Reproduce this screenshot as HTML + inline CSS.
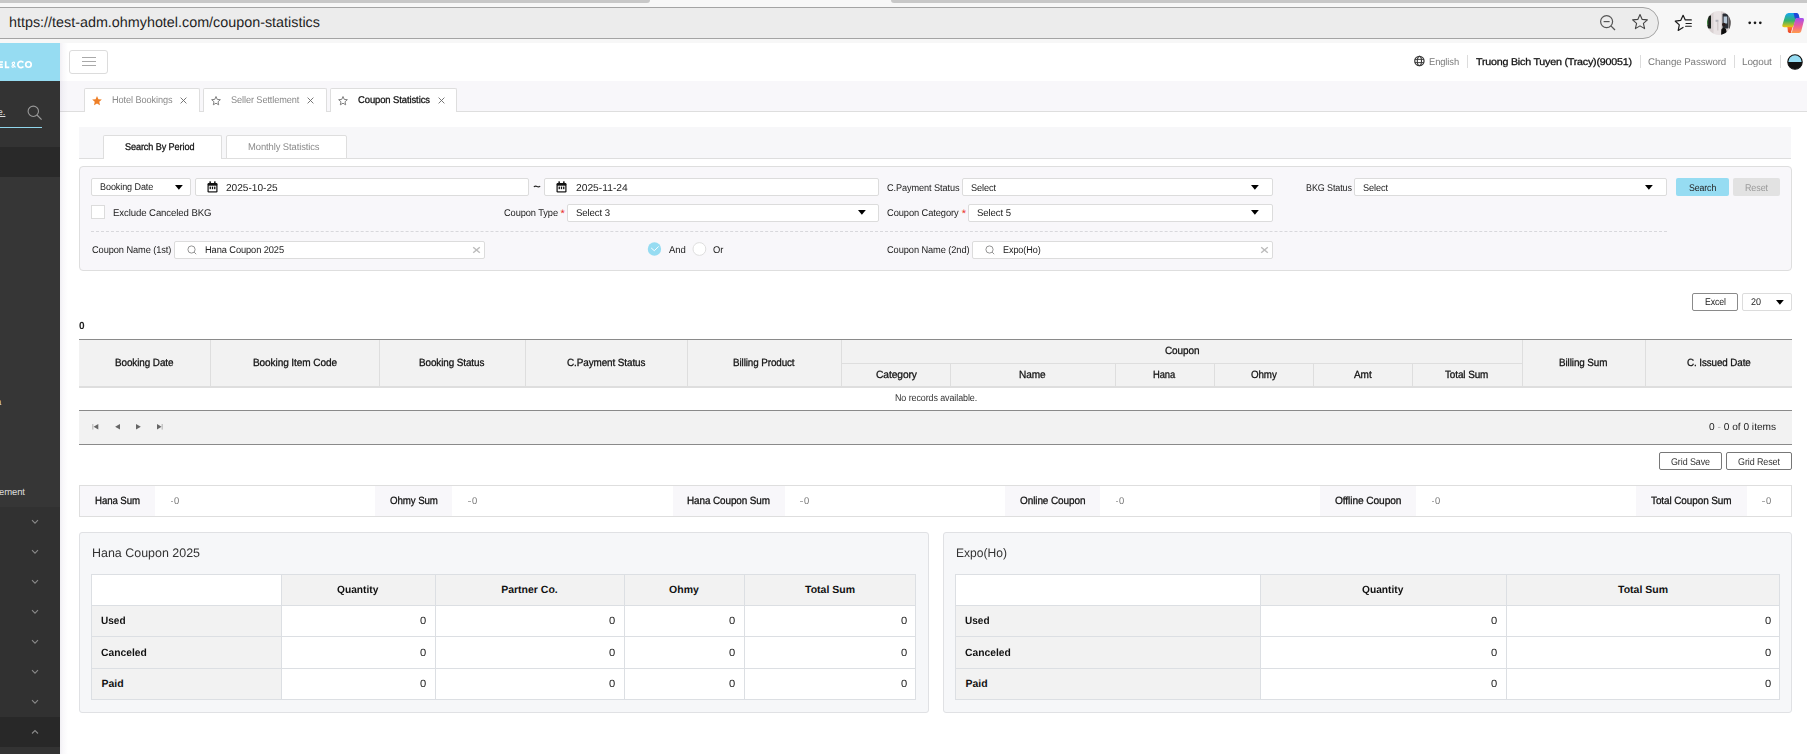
<!DOCTYPE html>
<html><head><meta charset="utf-8">
<style>
*{box-sizing:border-box}
html,body{margin:0;padding:0}
body{width:1807px;height:754px;overflow:hidden;position:relative;background:#fff;font-family:"Liberation Sans",sans-serif;color:#222;text-rendering:geometricPrecision}
.a{position:absolute}
.t{position:absolute;white-space:nowrap;line-height:1}
</style></head><body>
<div class="a" style="left:0.00px;top:0.00px;width:1807.00px;height:43.00px;background:#f7f7f7"></div>
<div class="a" style="left:0.00px;top:0.00px;width:649.50px;height:3.00px;background:#c8c8c8;border-bottom-right-radius:3px"></div>
<div class="a" style="left:891.00px;top:0.00px;width:916.00px;height:3.00px;background:#c8c8c8;border-bottom-left-radius:3px"></div>
<div class="a" style="left:-40.00px;top:7.00px;width:1699.00px;height:32.00px;background:#ececec;border:1px solid #a4a4a4;border-radius:16px"></div>
<div class="t" style="left:9px;top:16px;font-size:14.35px;color:#1f1f1f">https://test-adm.ohmyhotel.com/coupon-statistics</div>
<svg class="a" style="left:1598px;top:13px" width="20" height="20" viewBox="0 0 20 20"><circle cx="8.6" cy="8.6" r="6" fill="none" stroke="#555" stroke-width="1.2"/><line x1="5.6" y1="8.6" x2="11.6" y2="8.6" stroke="#555" stroke-width="1.2"/><line x1="12.9" y1="12.9" x2="17" y2="17" stroke="#555" stroke-width="1.3"/></svg>
<svg class="a" style="left:1631px;top:13px" width="18" height="18" viewBox="0 0 18 18"><path d="M9 1.5 L11.2 6.4 L16.4 6.9 L12.4 10.4 L13.6 15.6 L9 12.9 L4.4 15.6 L5.6 10.4 L1.6 6.9 L6.8 6.4 Z" fill="none" stroke="#444" stroke-width="1.1" stroke-linejoin="round"/></svg>
<svg class="a" style="left:1674px;top:13px" width="20" height="20" viewBox="0 0 20 20"><path d="M17.3 6.9 H11.3 L9.1 2.3 L6.8 7.3 L1.3 8.2 L5.3 11.9 L4.2 17.4 L9 14.4" fill="none" stroke="#1a1a1a" stroke-width="1.2" stroke-linejoin="round" stroke-linecap="round"/><path d="M12 10.5 H17.3 M11.6 13.2 H17.3" stroke="#1a1a1a" stroke-width="1.15" stroke-linecap="round"/></svg>
<svg class="a" style="left:1707px;top:11px" width="24" height="24" viewBox="0 0 24 24"><defs><clipPath id="av"><circle cx="11.9" cy="12" r="11.9"/></clipPath><filter id="avb" x="-20%" y="-20%" width="140%" height="140%"><feGaussianBlur stdDeviation="0.4"/></filter></defs><g clip-path="url(#av)"><g filter="url(#avb)"><rect x="-2" y="-2" width="28" height="28" fill="#d9d1d2"/><rect x="6.5" y="-2" width="7.5" height="28" fill="#e9e3e4"/><rect x="0" y="4.5" width="4" height="13" fill="#1c241c"/><rect x="0" y="7" width="1.2" height="7" fill="#3f7f3f"/><rect x="8.6" y="8.8" width="2.8" height="2" fill="#b0b0b8"/><rect x="10.4" y="10.5" width="0.9" height="9" fill="#c4bcbc"/><rect x="15.5" y="2.5" width="6" height="15" rx="1" fill="#2a2e34"/><rect x="16.6" y="5.5" width="3.6" height="7" fill="#b8c8d8"/><rect x="22" y="6" width="3" height="13" fill="#5a5454"/><circle cx="16.8" cy="13.6" r="1.8" fill="#2a1f1c"/><path d="M14 26 L14.3 18.5 Q15.3 16.4 17.4 16.8 Q19.6 17.6 19.4 20 L20.5 26 Z" fill="#101010"/></g></g></svg>
<svg class="a" style="left:1746px;top:20px" width="18" height="6" viewBox="0 0 18 6"><circle cx="3.7" cy="2.8" r="1.35" fill="#1a1a1a"/><circle cx="9" cy="2.8" r="1.35" fill="#1a1a1a"/><circle cx="14.3" cy="2.8" r="1.35" fill="#1a1a1a"/></svg>
<svg class="a" style="left:1781px;top:12px" width="24" height="22" viewBox="0 0 24 22"><defs><linearGradient id="cp1" x1="0" y1="0" x2="0" y2="1"><stop offset="0" stop-color="#16a6f6"/><stop offset="0.55" stop-color="#35b36a"/><stop offset="1" stop-color="#f3c40c"/></linearGradient><linearGradient id="cp2" x1="0" y1="0" x2="0" y2="1"><stop offset="0" stop-color="#a24df2"/><stop offset="0.55" stop-color="#ef5f96"/><stop offset="1" stop-color="#ff9d4a"/></linearGradient><linearGradient id="cp3" x1="0" y1="0" x2="0" y2="1"><stop offset="0" stop-color="#ff7a2a"/><stop offset="1" stop-color="#e8402a"/></linearGradient></defs><path d="M7.6 0.9 H15.4 Q17 0.9 16.6 2.4 L12.6 14 Q12.2 15.2 10.8 15.2 H3 Q1 15.2 1.3 13.2 L4.3 3.4 Q5.2 0.9 7.6 0.9 Z" fill="url(#cp1)"/><path d="M12.6 0.9 H15.6 Q17.3 0.9 17.8 2.8 L18.7 6.4 H13.8 Z" fill="#1f49d8"/><path d="M6.4 15 H11.6 L9.8 20.9 H8.6 Q7.2 20.9 6.9 19.6 Z" fill="url(#cp3)"/><path d="M16.4 6 H21.3 Q23.4 6 23 8.2 L20.2 19.2 Q19.7 21 18 21 H9.2 Q10.6 21 11.1 19.4 L14 8.2 Q14.6 6 16.4 6 Z" fill="url(#cp2)"/></svg>
<div class="a" style="left:0.00px;top:43.00px;width:60.00px;height:711.00px;background:#333"></div>
<div class="a" style="left:0.00px;top:43.00px;width:60.00px;height:38.00px;background:#96dcf2"></div>
<svg class="a" style="left:0px;top:58px" width="36" height="13" viewBox="0 0 36 13"><g fill="none" stroke="#fff" stroke-width="1.7"><path d="M-4 4 H3 M-4 6.6 H2.6 M-4 9.2 H3"/><path d="M5.7 3.2 V9.3 H9.3"/><path d="M23.4 4.6 A3.1 3.1 0 1 0 23.4 8.4"/><circle cx="28.45" cy="6.5" r="2.75"/></g><path d="M15.6 9.3 L12.6 6.2 Q11.6 5.2 12.8 4.4 Q14 3.7 14.6 4.8 Q15 5.8 13.4 6.9 Q11.3 8.2 12.2 9 Q13.2 9.7 14.8 7.8" fill="none" stroke="#fff" stroke-width="1.1"/></svg>
<div class="t" style="left:-2.5px;top:108px;font-size:9.5px;color:#ddd;text-decoration:underline;text-underline-offset:1px">e.</div>
<div class="a" style="left:0.00px;top:126.50px;width:42.00px;height:1.70px;background:#8fd6ec"></div>
<svg class="a" style="left:27px;top:105px" width="16" height="16" viewBox="0 0 16 16"><circle cx="6.3" cy="6.3" r="5.2" fill="none" stroke="#9a9a9a" stroke-width="1.1"/><line x1="10" y1="10" x2="14.6" y2="14.6" stroke="#9a9a9a" stroke-width="1.2"/></svg>
<div class="a" style="left:0.00px;top:147.00px;width:60.00px;height:30.00px;background:#292929"></div>
<div class="a" style="left:0.00px;top:177.00px;width:60.00px;height:330.00px;background:#363636"></div>
<div class="t" style="left:-4px;top:398px;font-size:9.5px;color:#ddd">a</div>
<div class="t" style="left:-1px;top:488px;font-size:9.5px;color:#ddd;letter-spacing:-0.1px">ement</div>
<div class="a" style="left:0.00px;top:507.00px;width:60.00px;height:210.00px;background:#313131"></div>
<div class="a" style="left:0.00px;top:717.00px;width:60.00px;height:30.00px;background:#282828"></div>
<svg class="a" style="left:31px;top:519px" width="8" height="6" viewBox="0 0 8 6"><polyline points="1,1.2 4,4.2 7,1.2" fill="none" stroke="#8a8a8a" stroke-width="1.1"/></svg>
<svg class="a" style="left:31px;top:549px" width="8" height="6" viewBox="0 0 8 6"><polyline points="1,1.2 4,4.2 7,1.2" fill="none" stroke="#8a8a8a" stroke-width="1.1"/></svg>
<svg class="a" style="left:31px;top:579px" width="8" height="6" viewBox="0 0 8 6"><polyline points="1,1.2 4,4.2 7,1.2" fill="none" stroke="#8a8a8a" stroke-width="1.1"/></svg>
<svg class="a" style="left:31px;top:609px" width="8" height="6" viewBox="0 0 8 6"><polyline points="1,1.2 4,4.2 7,1.2" fill="none" stroke="#8a8a8a" stroke-width="1.1"/></svg>
<svg class="a" style="left:31px;top:639px" width="8" height="6" viewBox="0 0 8 6"><polyline points="1,1.2 4,4.2 7,1.2" fill="none" stroke="#8a8a8a" stroke-width="1.1"/></svg>
<svg class="a" style="left:31px;top:669px" width="8" height="6" viewBox="0 0 8 6"><polyline points="1,1.2 4,4.2 7,1.2" fill="none" stroke="#8a8a8a" stroke-width="1.1"/></svg>
<svg class="a" style="left:31px;top:699px" width="8" height="6" viewBox="0 0 8 6"><polyline points="1,1.2 4,4.2 7,1.2" fill="none" stroke="#8a8a8a" stroke-width="1.1"/></svg>
<svg class="a" style="left:31px;top:729px" width="8" height="6" viewBox="0 0 8 6"><polyline points="1,4.5 4,1.5 7,4.5" fill="none" stroke="#8a8a8a" stroke-width="1.1"/></svg>
<div class="a" style="left:69.00px;top:50.00px;width:39.00px;height:24.00px;background:#fff;border:1px solid #dcdcdc;border-radius:3px"></div>
<div class="a" style="left:82.00px;top:56.70px;width:14.00px;height:1.30px;background:#a9a9a9"></div>
<div class="a" style="left:82.00px;top:60.60px;width:14.00px;height:1.30px;background:#a9a9a9"></div>
<div class="a" style="left:82.00px;top:64.50px;width:14.00px;height:1.30px;background:#a9a9a9"></div>
<svg class="a" style="left:1413px;top:55px" width="13" height="13" viewBox="0 0 13 13"><g fill="none" stroke="#3a3a3a"><circle cx="6.4" cy="6" r="4.65" stroke-width="1.25"/><ellipse cx="6.4" cy="6" rx="2.1" ry="4.65" stroke-width="1.1"/><line x1="1.8" y1="4.4" x2="11" y2="4.4" stroke-width="0.95"/><line x1="1.8" y1="7.6" x2="11" y2="7.6" stroke-width="0.95"/></g></svg>
<div class="t" style="left:1429.00px;top:58px;font-size:9.8px;color:#7a7a7a;letter-spacing:-0.1px;transform:scaleX(0.9542);transform-origin:0 0;">English</div>
<div class="a" style="left:1467.00px;top:55.00px;width:1.00px;height:12.50px;background:#dcdcdc"></div>
<div class="t" style="left:1475.50px;top:58px;font-size:9.8px;-webkit-text-stroke:0.28px currentColor;color:#111;letter-spacing:-0.2px;transform:scaleX(1.0920);transform-origin:0 0;">Truong Bich Tuyen (Tracy)(90051)</div>
<div class="a" style="left:1640.00px;top:55.00px;width:1.00px;height:12.50px;background:#dcdcdc"></div>
<div class="t" style="left:1647.70px;top:58px;font-size:9.8px;color:#7a7a7a;letter-spacing:-0.1px;transform:scaleX(0.9953);transform-origin:0 0;">Change Password</div>
<div class="a" style="left:1734.00px;top:55.00px;width:1.00px;height:12.50px;background:#dcdcdc"></div>
<div class="t" style="left:1741.70px;top:58px;font-size:9.8px;color:#7a7a7a;letter-spacing:-0.1px;transform:scaleX(1.0140);transform-origin:0 0;">Logout</div>
<div class="a" style="left:1780.00px;top:55.00px;width:1.00px;height:12.50px;background:#dcdcdc"></div>
<svg class="a" style="left:1786.5px;top:53.5px" width="16" height="16" viewBox="0 0 16 16"><defs><clipPath id="hc"><circle cx="8" cy="8" r="7.2"/></clipPath></defs><g clip-path="url(#hc)"><rect width="16" height="8" fill="#96dcf2"/><rect y="8" width="16" height="8" fill="#111"/></g><circle cx="8" cy="8" r="7.2" fill="none" stroke="#111" stroke-width="1.1"/></svg>
<div class="a" style="left:60.00px;top:81.00px;width:1747.00px;height:31.00px;background:#f8f7fa;border-bottom:1px solid #dedede"></div>
<div class="a" style="left:84.00px;top:88.00px;width:115.50px;height:24.00px;background:#fff;border:1px solid #dedede;border-bottom:none;border-radius:2px 2px 0 0"></div>
<div class="a" style="left:203.00px;top:88.00px;width:123.50px;height:24.00px;background:#fff;border:1px solid #dedede;border-bottom:none;border-radius:2px 2px 0 0"></div>
<div class="a" style="left:330.00px;top:88.00px;width:126.50px;height:24.00px;background:#fff;border:1px solid #dedede;border-bottom:none;border-radius:2px 2px 0 0"></div>
<div class="a" style="left:331.00px;top:111.00px;width:124.50px;height:1.00px;background:#fff"></div>
<svg class="a" style="left:91px;top:94px" width="12" height="12" viewBox="0 0 12 12"><path d="M6.00 2.00 L7.41 5.16 L10.85 5.52 L8.28 7.84 L9.00 11.23 L6.00 9.50 L3.00 11.23 L3.72 7.84 L1.15 5.52 L4.59 5.16 Z" fill="#ee7f27"/></svg>
<div class="t" style="left:111.60px;top:96px;font-size:9.8px;color:#8a8a8a;letter-spacing:-0.1px;transform:scaleX(0.9365);transform-origin:0 0;">Hotel Bookings</div>
<svg class="a" style="left:179.5px;top:96.5px" width="7" height="7" viewBox="0 0 7 7"><path d="M0.6 0.6 L6.4 6.4 M6.4 0.6 L0.6 6.4" stroke="#6a6a6a" stroke-width="0.9"/></svg>
<svg class="a" style="left:210px;top:94px" width="12" height="12" viewBox="0 0 12 12"><path d="M6.00 2.50 L7.23 5.40 L10.37 5.68 L8.00 7.75 L8.70 10.82 L6.00 9.20 L3.30 10.82 L4.00 7.75 L1.63 5.68 L4.77 5.40 Z" fill="none" stroke="#7a7a7a" stroke-width="0.95" stroke-linejoin="round"/></svg>
<div class="t" style="left:230.60px;top:96px;font-size:9.8px;color:#8a8a8a;letter-spacing:-0.1px;transform:scaleX(0.9366);transform-origin:0 0;">Seller Settlement</div>
<svg class="a" style="left:306.5px;top:96.5px" width="7" height="7" viewBox="0 0 7 7"><path d="M0.6 0.6 L6.4 6.4 M6.4 0.6 L0.6 6.4" stroke="#6a6a6a" stroke-width="0.9"/></svg>
<svg class="a" style="left:337px;top:94px" width="12" height="12" viewBox="0 0 12 12"><path d="M6.00 2.50 L7.23 5.40 L10.37 5.68 L8.00 7.75 L8.70 10.82 L6.00 9.20 L3.30 10.82 L4.00 7.75 L1.63 5.68 L4.77 5.40 Z" fill="none" stroke="#7a7a7a" stroke-width="0.95" stroke-linejoin="round"/></svg>
<div class="t" style="left:358.00px;top:96px;font-size:9.8px;-webkit-text-stroke:0.28px currentColor;color:#111;letter-spacing:-0.1px;transform:scaleX(0.9646);transform-origin:0 0;">Coupon Statistics</div>
<svg class="a" style="left:437.5px;top:96.5px" width="7" height="7" viewBox="0 0 7 7"><path d="M0.6 0.6 L6.4 6.4 M6.4 0.6 L0.6 6.4" stroke="#6a6a6a" stroke-width="0.9"/></svg>
<div class="a" style="left:79.00px;top:127.00px;width:1712.00px;height:32.00px;background:#f7f7f9;border-bottom:1px solid #dedede"></div>
<div class="a" style="left:103.00px;top:135.00px;width:119.00px;height:24.00px;background:#fff;border:1px solid #dedede;border-bottom:none;border-radius:2px 2px 0 0"></div>
<div class="a" style="left:226.00px;top:135.00px;width:121.00px;height:24.00px;background:#fff;border:1px solid #dedede;border-radius:2px 2px 0 0"></div>
<div class="t" style="left:125.10px;top:143px;font-size:9.8px;-webkit-text-stroke:0.28px currentColor;color:#111;letter-spacing:-0.1px;transform:scaleX(0.9298);transform-origin:0 0;">Search By Period</div>
<div class="t" style="left:248.00px;top:143px;font-size:9.8px;color:#8a8a8a;letter-spacing:-0.1px;transform:scaleX(0.9605);transform-origin:0 0;">Monthly Statistics</div>
<div class="a" style="left:79.00px;top:166.00px;width:1713.00px;height:105.00px;background:#f8f7fa;border:1px solid #dedede;border-radius:4px"></div>
<div class="a" style="left:91.00px;top:178.00px;width:100.00px;height:18.00px;background:#fff;border:1px solid #dcdcdc;border-radius:2px"></div>
<div class="t" style="left:100.00px;top:183px;font-size:9.8px;color:#222;letter-spacing:-0.1px;transform:scaleX(0.9230);transform-origin:0 0;">Booking Date</div>
<svg class="a" style="left:174.10px;top:184.00px" width="9.80" height="6.80"><path d="M1 1 L8.80 1 L4.90 5.80 Z" fill="#000"/></svg>
<div class="a" style="left:195.00px;top:178.00px;width:334.00px;height:18.00px;background:#fff;border:1px solid #dcdcdc;border-radius:2px"></div>
<svg class="a" style="left:207px;top:180.8px" width="11" height="12" viewBox="0 0 11 12"><rect x="0.5" y="2" width="10" height="9.5" rx="1.2" fill="#111"/><rect x="1.7" y="4.7" width="7.6" height="5.6" fill="#fff"/><rect x="2.4" y="0.2" width="1.5" height="3.2" rx="0.5" fill="#111"/><rect x="7.1" y="0.2" width="1.5" height="3.2" rx="0.5" fill="#111"/><rect x="2.6" y="5.6" width="1.3" height="2.6" fill="#111"/><rect x="4.85" y="5.6" width="1.3" height="2.6" fill="#111"/><rect x="7.1" y="5.6" width="1.3" height="2.6" fill="#111"/></svg>
<div class="t" style="left:225.50px;top:184px;font-size:10px;color:#222;letter-spacing:0px;transform:scaleX(1.0108);transform-origin:0 0;">2025-10-25</div>
<svg class="a" style="left:533px;top:184px" width="8" height="5" viewBox="0 0 8 5"><path d="M0.8 2.9 Q2.4 1.7 4 2.5 Q5.6 3.3 7.2 2.1" fill="none" stroke="#222" stroke-width="1.15"/></svg>
<div class="a" style="left:544.00px;top:178.00px;width:335.00px;height:18.00px;background:#fff;border:1px solid #dcdcdc;border-radius:2px"></div>
<svg class="a" style="left:556px;top:180.8px" width="11" height="12" viewBox="0 0 11 12"><rect x="0.5" y="2" width="10" height="9.5" rx="1.2" fill="#111"/><rect x="1.7" y="4.7" width="7.6" height="5.6" fill="#fff"/><rect x="2.4" y="0.2" width="1.5" height="3.2" rx="0.5" fill="#111"/><rect x="7.1" y="0.2" width="1.5" height="3.2" rx="0.5" fill="#111"/><rect x="2.6" y="5.6" width="1.3" height="2.6" fill="#111"/><rect x="4.85" y="5.6" width="1.3" height="2.6" fill="#111"/><rect x="7.1" y="5.6" width="1.3" height="2.6" fill="#111"/></svg>
<div class="t" style="left:575.60px;top:184px;font-size:10px;color:#222;letter-spacing:0px;transform:scaleX(1.0258);transform-origin:0 0;">2025-11-24</div>
<div class="t" style="left:886.60px;top:184px;font-size:9.8px;color:#222;letter-spacing:-0.1px;transform:scaleX(0.9356);transform-origin:0 0;">C.Payment Status</div>
<div class="a" style="left:962.00px;top:178.00px;width:311.00px;height:18.00px;background:#fff;border:1px solid #dcdcdc;border-radius:2px"></div>
<div class="t" style="left:970.50px;top:184px;font-size:9.8px;color:#222;letter-spacing:-0.1px;transform:scaleX(0.9348);transform-origin:0 0;">Select</div>
<svg class="a" style="left:1250.10px;top:184.00px" width="9.80" height="6.80"><path d="M1 1 L8.80 1 L4.90 5.80 Z" fill="#000"/></svg>
<div class="t" style="left:1306.10px;top:184px;font-size:9.8px;color:#222;letter-spacing:-0.1px;transform:scaleX(0.9144);transform-origin:0 0;">BKG Status</div>
<div class="a" style="left:1354.00px;top:178.00px;width:313.00px;height:18.00px;background:#fff;border:1px solid #dcdcdc;border-radius:2px"></div>
<div class="t" style="left:1363.00px;top:184px;font-size:9.8px;color:#222;letter-spacing:-0.1px;transform:scaleX(0.9348);transform-origin:0 0;">Select</div>
<svg class="a" style="left:1644.10px;top:183.50px" width="9.80" height="6.80"><path d="M1 1 L8.80 1 L4.90 5.80 Z" fill="#000"/></svg>
<div class="a" style="left:1676.00px;top:178.00px;width:53.00px;height:18.00px;background:#96dcf2;border-radius:2px"></div>
<div class="t" style="left:1688.80px;top:184px;font-size:9.8px;color:#222;letter-spacing:-0.1px;transform:scaleX(0.8931);transform-origin:0 0;">Search</div>
<div class="a" style="left:1733.00px;top:178.00px;width:47.00px;height:18.00px;background:#e2e2e2;border-radius:2px"></div>
<div class="t" style="left:1744.90px;top:184px;font-size:9.8px;color:#9a9a9a;letter-spacing:-0.1px;transform:scaleX(0.9135);transform-origin:0 0;">Reset</div>
<div class="a" style="left:91.00px;top:205.00px;width:14.00px;height:14.00px;background:#fff;border:1px solid #dcdcdc"></div>
<div class="t" style="left:112.60px;top:209px;font-size:9.8px;color:#222;letter-spacing:-0.1px;transform:scaleX(0.9800);transform-origin:0 0;">Exclude Canceled BKG</div>
<div class="t" style="left:503.60px;top:209px;font-size:9.8px;color:#222;letter-spacing:-0.1px;transform:scaleX(0.9472);transform-origin:0 0;">Coupon Type</div>
<div class="t" style="left:560.5px;top:209px;font-size:11px;color:#e8302a">*</div>
<div class="a" style="left:567.00px;top:204.00px;width:312.00px;height:18.00px;background:#fff;border:1px solid #dcdcdc;border-radius:2px"></div>
<div class="t" style="left:575.50px;top:209px;font-size:9.8px;color:#222;letter-spacing:-0.1px;transform:scaleX(0.9791);transform-origin:0 0;">Select 3</div>
<svg class="a" style="left:856.60px;top:209.20px" width="9.80" height="6.80"><path d="M1 1 L8.80 1 L4.90 5.80 Z" fill="#000"/></svg>
<div class="t" style="left:886.60px;top:209px;font-size:9.8px;color:#222;letter-spacing:-0.1px;transform:scaleX(0.9505);transform-origin:0 0;">Coupon Category</div>
<div class="t" style="left:961.8px;top:209px;font-size:11px;color:#e8302a">*</div>
<div class="a" style="left:968.00px;top:204.00px;width:305.00px;height:18.00px;background:#fff;border:1px solid #dcdcdc;border-radius:2px"></div>
<div class="t" style="left:976.50px;top:209px;font-size:9.8px;color:#222;letter-spacing:-0.1px;transform:scaleX(0.9791);transform-origin:0 0;">Select 5</div>
<svg class="a" style="left:1250.10px;top:209.20px" width="9.80" height="6.80"><path d="M1 1 L8.80 1 L4.90 5.80 Z" fill="#000"/></svg>
<div class="a" style="left:91.3px;top:231px;width:1576px;height:0;border-top:1px dashed #d8d8dc"></div>
<div class="t" style="left:91.90px;top:246px;font-size:9.8px;color:#222;letter-spacing:-0.1px;transform:scaleX(0.9463);transform-origin:0 0;">Coupon Name (1st)</div>
<div class="a" style="left:174.00px;top:241.00px;width:311.00px;height:18.00px;background:#fff;border:1px solid #dcdcdc;border-radius:2px"></div>
<svg class="a" style="left:186.6px;top:245px" width="10" height="10" viewBox="0 0 10 10"><circle cx="4.5" cy="4.5" r="3.6" fill="none" stroke="#888" stroke-width="0.9"/><line x1="7.1" y1="7.1" x2="9.2" y2="9.2" stroke="#888" stroke-width="0.9"/></svg>
<div class="t" style="left:205.10px;top:246px;font-size:9.8px;color:#222;letter-spacing:-0.1px;transform:scaleX(0.9471);transform-origin:0 0;">Hana Coupon 2025</div>
<svg class="a" style="left:471.8px;top:245.5px" width="9" height="8" viewBox="0 0 9 8"><path d="M1.2 1.2 L7.8 6.8 M7.8 1.2 L1.2 6.8" stroke="#bcbcbc" stroke-width="1.45"/></svg>
<svg class="a" style="left:647px;top:242px" width="15" height="15" viewBox="0 0 15 15"><circle cx="7.45" cy="7" r="6.7" fill="#96dcf2"/><polyline points="4.2,6 7.3,8.7 11.6,4.5" fill="none" stroke="#fff" stroke-width="0.95"/></svg>
<div class="t" style="left:669.00px;top:246px;font-size:9.8px;color:#222;letter-spacing:-0.1px;transform:scaleX(0.9743);transform-origin:0 0;">And</div>
<svg class="a" style="left:691.5px;top:242px" width="15" height="15" viewBox="0 0 15 15"><circle cx="7.4" cy="7" r="6.4" fill="#fff" stroke="#dcdcdc" stroke-width="0.95"/></svg>
<div class="t" style="left:713.40px;top:246px;font-size:9.8px;color:#222;letter-spacing:-0.1px;transform:scaleX(0.9557);transform-origin:0 0;">Or</div>
<div class="t" style="left:886.60px;top:246px;font-size:9.8px;color:#222;letter-spacing:-0.1px;transform:scaleX(0.9474);transform-origin:0 0;">Coupon Name (2nd)</div>
<div class="a" style="left:972.00px;top:241.00px;width:301.00px;height:18.00px;background:#fff;border:1px solid #dcdcdc;border-radius:2px"></div>
<svg class="a" style="left:984.8px;top:245px" width="10" height="10" viewBox="0 0 10 10"><circle cx="4.5" cy="4.5" r="3.6" fill="none" stroke="#888" stroke-width="0.9"/><line x1="7.1" y1="7.1" x2="9.2" y2="9.2" stroke="#888" stroke-width="0.9"/></svg>
<div class="t" style="left:1002.60px;top:246px;font-size:9.8px;color:#222;letter-spacing:-0.1px;transform:scaleX(0.9262);transform-origin:0 0;">Expo(Ho)</div>
<svg class="a" style="left:1259.6px;top:245.5px" width="9" height="8" viewBox="0 0 9 8"><path d="M1.2 1.2 L7.8 6.8 M7.8 1.2 L1.2 6.8" stroke="#bcbcbc" stroke-width="1.45"/></svg>
<div class="a" style="left:60.00px;top:43.00px;width:8.00px;height:711.00px;background:linear-gradient(90deg,rgba(70,50,110,0.075),rgba(70,50,110,0.03) 40%,rgba(70,50,110,0))"></div>
<div class="a" style="left:1692.00px;top:293.00px;width:46.00px;height:18.00px;background:#fff;border:1px solid #8a8a8a;border-radius:2px"></div>
<div class="t" style="left:1704.90px;top:298px;font-size:9.8px;color:#222;letter-spacing:-0.1px;transform:scaleX(0.8913);transform-origin:0 0;">Excel</div>
<div class="a" style="left:1742.00px;top:293.00px;width:50.00px;height:18.00px;background:#fff;border:1px solid #dcdcdc;border-radius:2px"></div>
<div class="t" style="left:1750.90px;top:298px;font-size:9.8px;color:#222;letter-spacing:0px;transform:scaleX(0.9193);transform-origin:0 0;">20</div>
<svg class="a" style="left:1775.00px;top:298.90px" width="9.80" height="6.80"><path d="M1 1 L8.80 1 L4.90 5.80 Z" fill="#000"/></svg>
<div class="t" style="left:79.30px;top:322px;font-size:10.3px;font-weight:bold;color:#222;letter-spacing:0px;transform:scaleX(0.9796);transform-origin:0 0;">0</div>
<div class="a" style="left:79.00px;top:339.00px;width:1713.00px;height:1.00px;background:#8a8a8a"></div>
<div class="a" style="left:79.00px;top:340.00px;width:1713.00px;height:46.00px;background:#f2f2f2"></div>
<div class="a" style="left:79.00px;top:386.00px;width:1713.00px;height:2.00px;background:#dedede"></div>
<div class="a" style="left:210.00px;top:340.00px;width:1.00px;height:46.00px;background:#dedede"></div>
<div class="a" style="left:379.00px;top:340.00px;width:1.00px;height:46.00px;background:#dedede"></div>
<div class="a" style="left:525.00px;top:340.00px;width:1.00px;height:46.00px;background:#dedede"></div>
<div class="a" style="left:687.00px;top:340.00px;width:1.00px;height:46.00px;background:#dedede"></div>
<div class="a" style="left:841.00px;top:340.00px;width:1.00px;height:46.00px;background:#dedede"></div>
<div class="a" style="left:1522.00px;top:340.00px;width:1.00px;height:46.00px;background:#dedede"></div>
<div class="a" style="left:1645.00px;top:340.00px;width:1.00px;height:46.00px;background:#dedede"></div>
<div class="a" style="left:950.00px;top:364.00px;width:1.00px;height:22.00px;background:#dedede"></div>
<div class="a" style="left:1115.00px;top:364.00px;width:1.00px;height:22.00px;background:#dedede"></div>
<div class="a" style="left:1214.00px;top:364.00px;width:1.00px;height:22.00px;background:#dedede"></div>
<div class="a" style="left:1313.00px;top:364.00px;width:1.00px;height:22.00px;background:#dedede"></div>
<div class="a" style="left:1412.00px;top:364.00px;width:1.00px;height:22.00px;background:#dedede"></div>
<div class="a" style="left:842.00px;top:363.00px;width:680.00px;height:1.00px;background:#dedede"></div>
<div class="t" style="left:115.25px;top:358px;font-size:10.5px;-webkit-text-stroke:0.28px currentColor;color:#111;letter-spacing:-0.1px;transform:scaleX(0.9443);transform-origin:0 0;">Booking Date</div>
<div class="t" style="left:252.50px;top:358px;font-size:10.5px;-webkit-text-stroke:0.28px currentColor;color:#111;letter-spacing:-0.1px;transform:scaleX(0.9578);transform-origin:0 0;">Booking Item Code</div>
<div class="t" style="left:419.34px;top:358px;font-size:10.5px;-webkit-text-stroke:0.28px currentColor;color:#111;letter-spacing:-0.1px;transform:scaleX(0.9423);transform-origin:0 0;">Booking Status</div>
<div class="t" style="left:566.77px;top:358px;font-size:10.5px;-webkit-text-stroke:0.28px currentColor;color:#111;letter-spacing:-0.1px;transform:scaleX(0.9437);transform-origin:0 0;">C.Payment Status</div>
<div class="t" style="left:733.21px;top:358px;font-size:10.5px;-webkit-text-stroke:0.28px currentColor;color:#111;letter-spacing:-0.1px;transform:scaleX(0.9373);transform-origin:0 0;">Billing Product</div>
<div class="t" style="left:1559.30px;top:358px;font-size:10.5px;-webkit-text-stroke:0.28px currentColor;color:#111;letter-spacing:-0.1px;transform:scaleX(0.9398);transform-origin:0 0;">Billing Sum</div>
<div class="t" style="left:1686.60px;top:358px;font-size:10.5px;-webkit-text-stroke:0.28px currentColor;color:#111;letter-spacing:-0.1px;transform:scaleX(0.9361);transform-origin:0 0;">C. Issued Date</div>
<div class="t" style="left:1164.90px;top:346px;font-size:10.5px;-webkit-text-stroke:0.28px currentColor;color:#111;letter-spacing:-0.1px;transform:scaleX(0.9503);transform-origin:0 0;">Coupon</div>
<div class="t" style="left:875.50px;top:370px;font-size:10.5px;-webkit-text-stroke:0.28px currentColor;color:#111;letter-spacing:-0.1px;transform:scaleX(0.9778);transform-origin:0 0;">Category</div>
<div class="t" style="left:1019.22px;top:370px;font-size:10.5px;-webkit-text-stroke:0.28px currentColor;color:#111;letter-spacing:-0.1px;transform:scaleX(0.9579);transform-origin:0 0;">Name</div>
<div class="t" style="left:1153.35px;top:370px;font-size:10.5px;-webkit-text-stroke:0.28px currentColor;color:#111;letter-spacing:-0.1px;transform:scaleX(0.8975);transform-origin:0 0;">Hana</div>
<div class="t" style="left:1250.60px;top:370px;font-size:10.5px;-webkit-text-stroke:0.28px currentColor;color:#111;letter-spacing:-0.1px;transform:scaleX(0.9320);transform-origin:0 0;">Ohmy</div>
<div class="t" style="left:1353.64px;top:370px;font-size:10.5px;-webkit-text-stroke:0.28px currentColor;color:#111;letter-spacing:-0.1px;transform:scaleX(0.9579);transform-origin:0 0;">Amt</div>
<div class="t" style="left:1445.33px;top:370px;font-size:10.5px;-webkit-text-stroke:0.28px currentColor;color:#111;letter-spacing:-0.1px;transform:scaleX(0.9449);transform-origin:0 0;">Total Sum</div>
<div class="t" style="left:894.60px;top:394px;font-size:9.8px;color:#333;letter-spacing:-0.1px;transform:scaleX(0.9126);transform-origin:0 0;">No records available.</div>
<div class="a" style="left:79.00px;top:410.00px;width:1713.00px;height:1.00px;background:#8a8a8a"></div>
<div class="a" style="left:79.00px;top:411.00px;width:1713.00px;height:33.00px;background:#f2f2f2"></div>
<div class="a" style="left:79.00px;top:444.00px;width:1713.00px;height:1.00px;background:#8a8a8a"></div>
<svg class="a" style="left:85px;top:418px" width="85" height="16" viewBox="85 418 85 16"><rect x="92.4" y="424" width="0.9" height="5.6" fill="#aaa"/><path d="M98.3 424 L93.6 426.8 L98.3 429.6 Z" fill="#666"/><path d="M120 424 L115.1 426.8 L120 429.6 Z" fill="#666"/><path d="M136 424 L140.8 426.8 L136 429.6 Z" fill="#666"/><path d="M157 424 L161.6 426.8 L157 429.6 Z" fill="#666"/><rect x="161.7" y="424" width="0.9" height="5.6" fill="#aaa"/></svg>
<div class="t" style="left:1709.40px;top:423px;font-size:10px;color:#222;letter-spacing:0px;transform:scaleX(1.0144);transform-origin:0 0;">0 <span style="color:#aaa">-</span> 0 of 0 items</div>
<div class="a" style="left:1659.00px;top:452.00px;width:63.00px;height:18.00px;background:#fff;border:1px solid #777;border-radius:2px"></div>
<div class="t" style="left:1670.90px;top:458px;font-size:9.8px;color:#333;letter-spacing:-0.1px;transform:scaleX(0.9120);transform-origin:0 0;">Grid Save</div>
<div class="a" style="left:1726.00px;top:452.00px;width:66.00px;height:18.00px;background:#fff;border:1px solid #777;border-radius:2px"></div>
<div class="t" style="left:1738.00px;top:458px;font-size:9.8px;color:#333;letter-spacing:-0.1px;transform:scaleX(0.9142);transform-origin:0 0;">Grid Reset</div>
<div class="a" style="left:79.00px;top:485.00px;width:1713.00px;height:32.00px;background:#fff;border:1px solid #dedede"></div>
<div class="a" style="left:80.00px;top:486.00px;width:75.00px;height:30.00px;background:#f8f7fa"></div>
<div class="t" style="left:95.00px;top:496px;font-size:10.5px;-webkit-text-stroke:0.28px currentColor;color:#111;letter-spacing:-0.1px;transform:scaleX(0.9200);transform-origin:0 0;">Hana Sum</div>
<div class="a" style="left:170.7px;top:500.6px;width:2.6px;height:1.1px;background:#aaa"></div>
<div class="t" style="left:174.00px;top:497px;font-size:9.8px;color:#777;letter-spacing:0px;transform:scaleX(0.9561);transform-origin:0 0;">0</div>
<div class="a" style="left:375.00px;top:486.00px;width:77.00px;height:30.00px;background:#f8f7fa"></div>
<div class="t" style="left:390.10px;top:496px;font-size:10.5px;-webkit-text-stroke:0.28px currentColor;color:#111;letter-spacing:-0.1px;transform:scaleX(0.9247);transform-origin:0 0;">Ohmy Sum</div>
<div class="a" style="left:468.4px;top:500.6px;width:2.6px;height:1.1px;background:#aaa"></div>
<div class="t" style="left:471.70px;top:497px;font-size:9.8px;color:#777;letter-spacing:0px;transform:scaleX(0.9561);transform-origin:0 0;">0</div>
<div class="a" style="left:673.00px;top:486.00px;width:112.00px;height:30.00px;background:#f8f7fa"></div>
<div class="t" style="left:687.40px;top:496px;font-size:10.5px;-webkit-text-stroke:0.28px currentColor;color:#111;letter-spacing:-0.1px;transform:scaleX(0.9442);transform-origin:0 0;">Hana Coupon Sum</div>
<div class="a" style="left:800.3px;top:500.6px;width:2.6px;height:1.1px;background:#aaa"></div>
<div class="t" style="left:803.60px;top:497px;font-size:9.8px;color:#777;letter-spacing:0px;transform:scaleX(0.9561);transform-origin:0 0;">0</div>
<div class="a" style="left:1005.00px;top:486.00px;width:95.00px;height:30.00px;background:#f8f7fa"></div>
<div class="t" style="left:1019.50px;top:496px;font-size:10.5px;-webkit-text-stroke:0.28px currentColor;color:#111;letter-spacing:-0.1px;transform:scaleX(0.9516);transform-origin:0 0;">Online Coupon</div>
<div class="a" style="left:1115.7px;top:500.6px;width:2.6px;height:1.1px;background:#aaa"></div>
<div class="t" style="left:1119.00px;top:497px;font-size:9.8px;color:#777;letter-spacing:0px;transform:scaleX(0.9561);transform-origin:0 0;">0</div>
<div class="a" style="left:1320.00px;top:486.00px;width:96.00px;height:30.00px;background:#f8f7fa"></div>
<div class="t" style="left:1334.70px;top:496px;font-size:10.5px;-webkit-text-stroke:0.28px currentColor;color:#111;letter-spacing:-0.1px;transform:scaleX(0.9697);transform-origin:0 0;">Offline Coupon</div>
<div class="a" style="left:1431.6px;top:500.6px;width:2.6px;height:1.1px;background:#aaa"></div>
<div class="t" style="left:1434.90px;top:497px;font-size:9.8px;color:#777;letter-spacing:0px;transform:scaleX(0.9561);transform-origin:0 0;">0</div>
<div class="a" style="left:1636.00px;top:486.00px;width:111.00px;height:30.00px;background:#f8f7fa"></div>
<div class="t" style="left:1651.30px;top:496px;font-size:10.5px;-webkit-text-stroke:0.28px currentColor;color:#111;letter-spacing:-0.1px;transform:scaleX(0.9498);transform-origin:0 0;">Total Coupon Sum</div>
<div class="a" style="left:1762.4px;top:500.6px;width:2.6px;height:1.1px;background:#aaa"></div>
<div class="t" style="left:1765.70px;top:497px;font-size:9.8px;color:#777;letter-spacing:0px;transform:scaleX(0.9561);transform-origin:0 0;">0</div>
<div class="a" style="left:79.00px;top:532.00px;width:850.00px;height:181.00px;background:#f6f7f9;border:1px solid #e0e1e4;border-radius:3px"></div>
<div class="t" style="left:91.70px;top:547px;font-size:12.4px;color:#333;letter-spacing:0px;transform:scaleX(1.0049);transform-origin:0 0;">Hana Coupon 2025</div>
<div class="a" style="left:91.00px;top:574.00px;width:825.00px;height:126.00px;background:#fff;border:1px solid #dcdfe3"></div>
<div class="a" style="left:92.00px;top:606.00px;width:189.00px;height:93.00px;background:#f2f2f2"></div>
<div class="a" style="left:281.00px;top:575.00px;width:634.00px;height:30.00px;background:#f2f2f2"></div>
<div class="a" style="left:91.00px;top:605.00px;width:825.00px;height:1.00px;background:#dcdfe3"></div>
<div class="a" style="left:91.00px;top:636.00px;width:825.00px;height:1.00px;background:#dcdfe3"></div>
<div class="a" style="left:91.00px;top:668.00px;width:825.00px;height:1.00px;background:#dcdfe3"></div>
<div class="a" style="left:281.00px;top:574.00px;width:1.00px;height:126.00px;background:#dcdfe3"></div>
<div class="a" style="left:435.00px;top:574.00px;width:1.00px;height:126.00px;background:#dcdfe3"></div>
<div class="a" style="left:624.00px;top:574.00px;width:1.00px;height:126.00px;background:#dcdfe3"></div>
<div class="a" style="left:744.00px;top:574.00px;width:1.00px;height:126.00px;background:#dcdfe3"></div>
<div class="t" style="left:337.30px;top:585px;font-size:10.5px;font-weight:bold;color:#111;letter-spacing:0px;transform:scaleX(0.9723);transform-origin:0 0;">Quantity</div>
<div class="t" style="left:501.20px;top:585px;font-size:10.5px;font-weight:bold;color:#111;letter-spacing:0px;">Partner Co.</div>
<div class="t" style="left:669.12px;top:585px;font-size:10.5px;font-weight:bold;color:#111;letter-spacing:0px;">Ohmy</div>
<div class="t" style="left:805.01px;top:585px;font-size:10.5px;font-weight:bold;color:#111;letter-spacing:0px;">Total Sum</div>
<div class="t" style="left:101.40px;top:616px;font-size:10.5px;font-weight:bold;color:#111;letter-spacing:0px;transform:scaleX(0.9543);transform-origin:0 0;">Used</div>
<div class="t" style="left:419.70px;top:616px;font-size:10.5px;color:#222;letter-spacing:0px;transform:scaleX(1.0639);transform-origin:0 0;">0</div>
<div class="t" style="left:608.70px;top:616px;font-size:10.5px;color:#222;letter-spacing:0px;transform:scaleX(1.0639);transform-origin:0 0;">0</div>
<div class="t" style="left:728.70px;top:616px;font-size:10.5px;color:#222;letter-spacing:0px;transform:scaleX(1.0639);transform-origin:0 0;">0</div>
<div class="t" style="left:900.70px;top:616px;font-size:10.5px;color:#222;letter-spacing:0px;transform:scaleX(1.0639);transform-origin:0 0;">0</div>
<div class="t" style="left:101.40px;top:648px;font-size:10.5px;font-weight:bold;color:#111;letter-spacing:0px;transform:scaleX(0.9813);transform-origin:0 0;">Canceled</div>
<div class="t" style="left:419.70px;top:648px;font-size:10.5px;color:#222;letter-spacing:0px;transform:scaleX(1.0639);transform-origin:0 0;">0</div>
<div class="t" style="left:608.70px;top:648px;font-size:10.5px;color:#222;letter-spacing:0px;transform:scaleX(1.0639);transform-origin:0 0;">0</div>
<div class="t" style="left:728.70px;top:648px;font-size:10.5px;color:#222;letter-spacing:0px;transform:scaleX(1.0639);transform-origin:0 0;">0</div>
<div class="t" style="left:900.70px;top:648px;font-size:10.5px;color:#222;letter-spacing:0px;transform:scaleX(1.0639);transform-origin:0 0;">0</div>
<div class="t" style="left:101.40px;top:679px;font-size:10.5px;font-weight:bold;color:#111;letter-spacing:0px;">Paid</div>
<div class="t" style="left:419.70px;top:679px;font-size:10.5px;color:#222;letter-spacing:0px;transform:scaleX(1.0639);transform-origin:0 0;">0</div>
<div class="t" style="left:608.70px;top:679px;font-size:10.5px;color:#222;letter-spacing:0px;transform:scaleX(1.0639);transform-origin:0 0;">0</div>
<div class="t" style="left:728.70px;top:679px;font-size:10.5px;color:#222;letter-spacing:0px;transform:scaleX(1.0639);transform-origin:0 0;">0</div>
<div class="t" style="left:900.70px;top:679px;font-size:10.5px;color:#222;letter-spacing:0px;transform:scaleX(1.0639);transform-origin:0 0;">0</div>
<div class="a" style="left:943.00px;top:532.00px;width:849.00px;height:181.00px;background:#f6f7f9;border:1px solid #e0e1e4;border-radius:3px"></div>
<div class="t" style="left:955.70px;top:547px;font-size:12.4px;color:#333;letter-spacing:0px;transform:scaleX(0.9735);transform-origin:0 0;">Expo(Ho)</div>
<div class="a" style="left:955.00px;top:574.00px;width:825.00px;height:126.00px;background:#fff;border:1px solid #dcdfe3"></div>
<div class="a" style="left:956.00px;top:606.00px;width:304.00px;height:93.00px;background:#f2f2f2"></div>
<div class="a" style="left:1260.00px;top:575.00px;width:519.00px;height:30.00px;background:#f2f2f2"></div>
<div class="a" style="left:955.00px;top:605.00px;width:825.00px;height:1.00px;background:#dcdfe3"></div>
<div class="a" style="left:955.00px;top:636.00px;width:825.00px;height:1.00px;background:#dcdfe3"></div>
<div class="a" style="left:955.00px;top:668.00px;width:825.00px;height:1.00px;background:#dcdfe3"></div>
<div class="a" style="left:1260.00px;top:574.00px;width:1.00px;height:126.00px;background:#dcdfe3"></div>
<div class="a" style="left:1506.00px;top:574.00px;width:1.00px;height:126.00px;background:#dcdfe3"></div>
<div class="t" style="left:1362.30px;top:585px;font-size:10.5px;font-weight:bold;color:#111;letter-spacing:0px;transform:scaleX(0.9723);transform-origin:0 0;">Quantity</div>
<div class="t" style="left:1618.01px;top:585px;font-size:10.5px;font-weight:bold;color:#111;letter-spacing:0px;">Total Sum</div>
<div class="t" style="left:965.40px;top:616px;font-size:10.5px;font-weight:bold;color:#111;letter-spacing:0px;transform:scaleX(0.9543);transform-origin:0 0;">Used</div>
<div class="t" style="left:1490.70px;top:616px;font-size:10.5px;color:#222;letter-spacing:0px;transform:scaleX(1.0639);transform-origin:0 0;">0</div>
<div class="t" style="left:1764.70px;top:616px;font-size:10.5px;color:#222;letter-spacing:0px;transform:scaleX(1.0639);transform-origin:0 0;">0</div>
<div class="t" style="left:965.40px;top:648px;font-size:10.5px;font-weight:bold;color:#111;letter-spacing:0px;transform:scaleX(0.9813);transform-origin:0 0;">Canceled</div>
<div class="t" style="left:1490.70px;top:648px;font-size:10.5px;color:#222;letter-spacing:0px;transform:scaleX(1.0639);transform-origin:0 0;">0</div>
<div class="t" style="left:1764.70px;top:648px;font-size:10.5px;color:#222;letter-spacing:0px;transform:scaleX(1.0639);transform-origin:0 0;">0</div>
<div class="t" style="left:965.40px;top:679px;font-size:10.5px;font-weight:bold;color:#111;letter-spacing:0px;">Paid</div>
<div class="t" style="left:1490.70px;top:679px;font-size:10.5px;color:#222;letter-spacing:0px;transform:scaleX(1.0639);transform-origin:0 0;">0</div>
<div class="t" style="left:1764.70px;top:679px;font-size:10.5px;color:#222;letter-spacing:0px;transform:scaleX(1.0639);transform-origin:0 0;">0</div>
</body></html>
